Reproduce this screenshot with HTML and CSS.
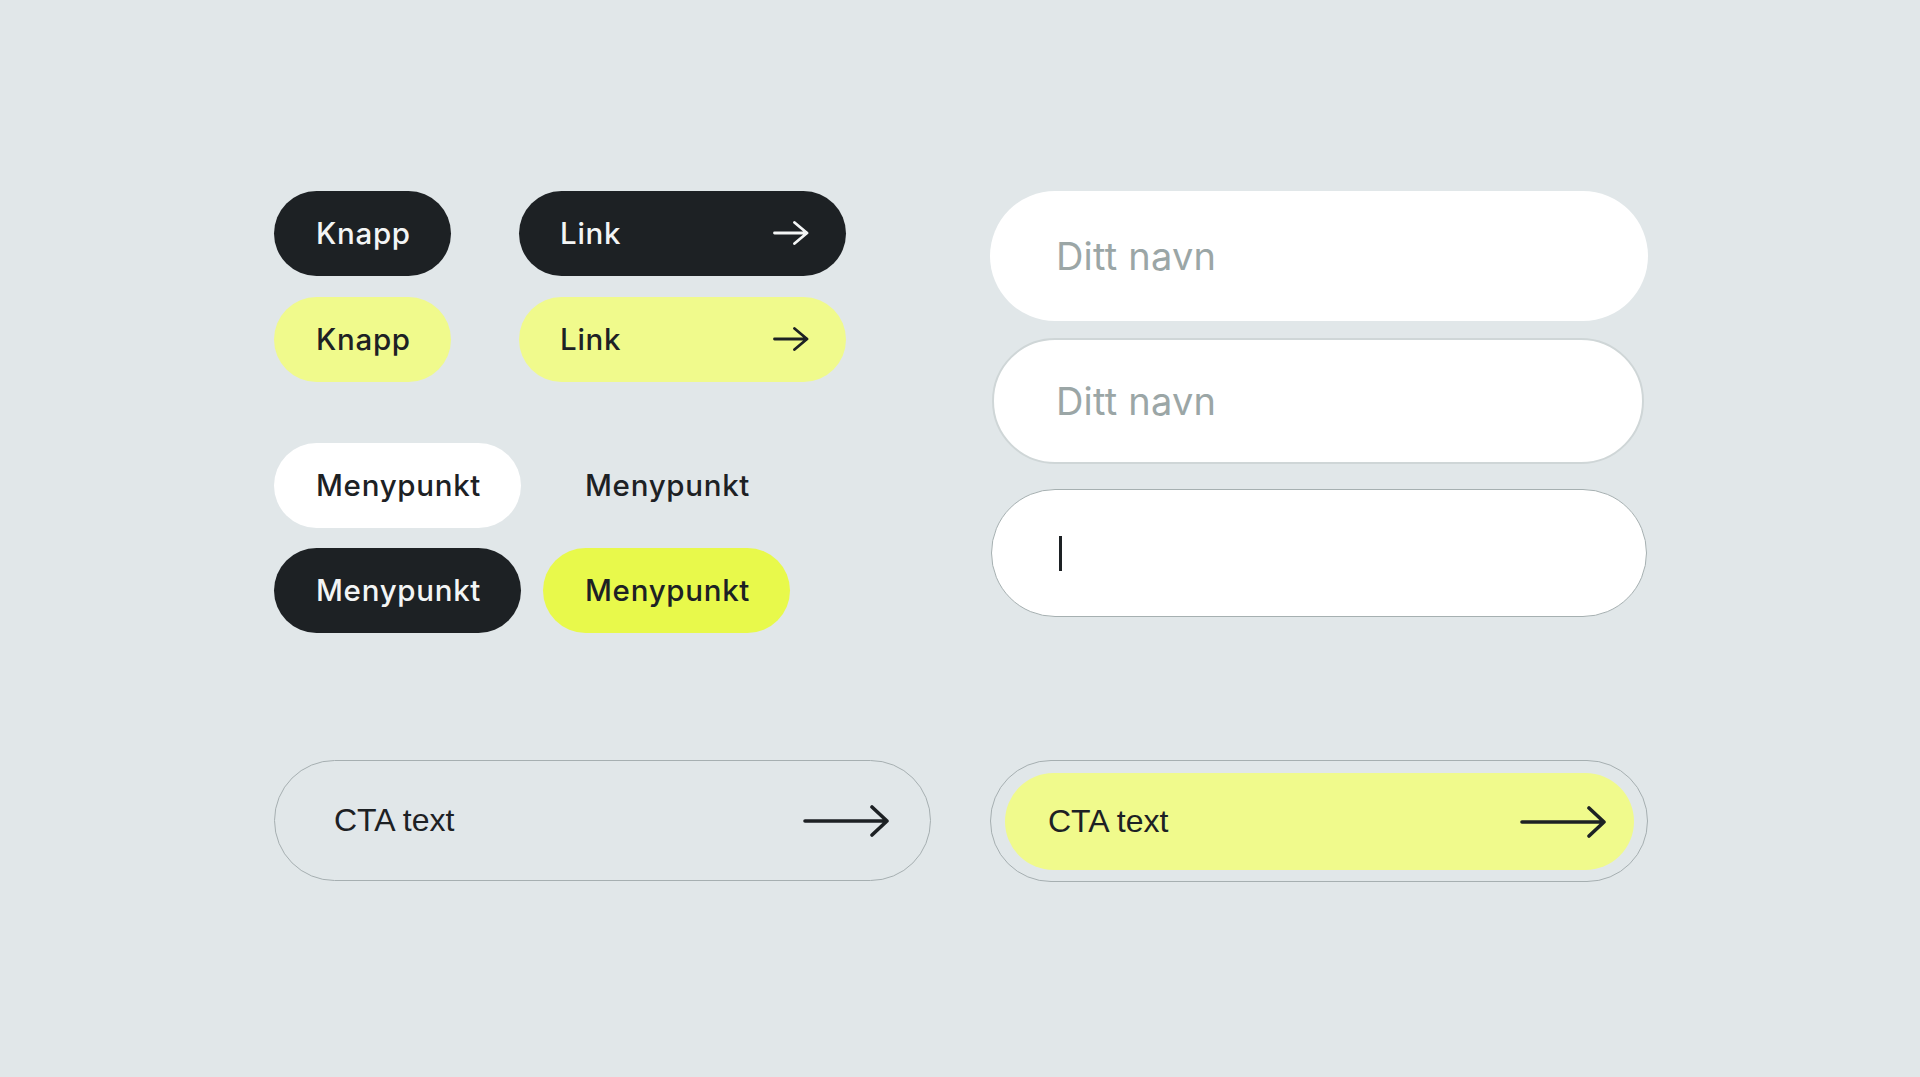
FILE: index.html
```html
<!DOCTYPE html>
<html lang="no">
<head>
<meta charset="utf-8">
<title>Komponenter</title>
<link rel="stylesheet" href="styles.css">
</head>
<body>
<main class="board">
  <section class="col-left">
    <div class="btn-row">
      <a class="pill pill-dark btn-knapp">Knapp</a>
      <a class="pill pill-dark btn-link"><span>Link</span>
        <svg class="arrow-sm" viewBox="0 0 36 24" width="36" height="24"><path d="M1.5 12H34M21.5 1.5L34 12L21.5 22.5" fill="none" stroke="currentColor" stroke-width="2.8" stroke-linecap="round" stroke-linejoin="round"/></svg>
      </a>
    </div>
    <div class="btn-row gap-sm">
      <a class="pill pill-pale btn-knapp">Knapp</a>
      <a class="pill pill-pale btn-link"><span>Link</span>
        <svg class="arrow-sm" viewBox="0 0 36 24" width="36" height="24"><path d="M1.5 12H34M21.5 1.5L34 12L21.5 22.5" fill="none" stroke="currentColor" stroke-width="2.8" stroke-linecap="round" stroke-linejoin="round"/></svg>
      </a>
    </div>
    <div class="menu-row gap-lg">
      <a class="pill menu pill-white">Menypunkt</a>
      <a class="pill menu pill-plain">Menypunkt</a>
    </div>
    <div class="menu-row gap-sm2">
      <a class="pill menu pill-dark">Menypunkt</a>
      <a class="pill menu pill-bright">Menypunkt</a>
    </div>
  </section>

  <section class="col-right">
    <div class="field field-plain"><span class="placeholder">Ditt navn</span></div>
    <div class="field field-hover"><span class="placeholder">Ditt navn</span></div>
    <div class="field field-focus"><span class="caret"></span></div>
  </section>

  <a class="cta cta-outline"><span>CTA text</span>
    <svg class="arrow-lg" viewBox="0 0 86 32" width="86" height="32"><path d="M2 16H84M69 2L84 16L69 30" fill="none" stroke="currentColor" stroke-width="3.6" stroke-linecap="round" stroke-linejoin="round"/></svg>
  </a>

  <div class="cta-ring">
    <a class="cta cta-fill"><span>CTA text</span>
      <svg class="arrow-lg" viewBox="0 0 86 32" width="86" height="32"><path d="M2 16H84M69 2L84 16L69 30" fill="none" stroke="currentColor" stroke-width="3.6" stroke-linecap="round" stroke-linejoin="round"/></svg>
    </a>
  </div>
</main>
</body>
</html>
```

FILE: styles.css
```css
* { box-sizing: border-box; }

html, body {
  margin: 0;
  padding: 0;
  background: #e1e7e9;
  width: 1920px;
  height: 1077px;
  overflow: hidden;
}

body {
  font-family: Inter, "Noto Sans", sans-serif;
  color: #1d2124;
}

.board {
  display: grid;
  grid-template-columns: 657px 658px;
  column-gap: 59px;
  row-gap: 127px;
  align-items: start;
  padding: 191px 0 0 274px;
}

.col-left, .col-right {
  display: flex;
  flex-direction: column;
}

.btn-row, .menu-row {
  display: flex;
  align-items: center;
}

.btn-row { gap: 68px; }
.menu-row { gap: 22px; }

.gap-sm { margin-top: 21px; }
.gap-lg { margin-top: 61px; }
.gap-sm2 { margin-top: 20px; }

.pill {
  display: flex;
  align-items: center;
  height: 85px;
  border-radius: 43px;
  padding: 0 42px;
  padding-bottom: 2px;
  font-size: 29.5px;
  font-weight: 500;
  letter-spacing: 0.7px;
  text-decoration: none;
  white-space: nowrap;
}

.pill-dark { background: #1d2124; color: #f3f5f5; }
.pill-pale { background: #f0fa8c; color: #1d2124; }
.pill-white { background: #ffffff; color: #1d2124; }
.pill-plain { background: transparent; color: #1d2124; }
.pill-bright { background: #e8f94b; color: #1d2124; }

.btn-knapp { width: 177px; }

.btn-link {
  width: 327px;
  padding: 0 37px 2px 41px;
  justify-content: space-between;
}

.menu {
  width: 247px;
}

.arrow-sm { display: block; }

/* inputs */
.field {
  display: flex;
  align-items: center;
  background: #ffffff;
  border-radius: 66px;
  padding-left: 66px;
}

.field-plain {
  height: 130px;
  width: 658px;
}

.field-hover {
  margin: 17px 4px 0 2px;
  height: 126px;
  border: 2px solid #cfd6d7;
  padding-left: 62px;
}

.field-focus {
  margin: 25px 1px 0 1px;
  height: 128px;
  border: 1.5px solid #a6b0b1;
  padding-left: 67px;
}

.placeholder {
  font-size: 38px;
  font-weight: 400;
  color: #9ba6a6;
  letter-spacing: 0.2px;
}

.caret {
  display: block;
  width: 3px;
  height: 35px;
  background: #1d2124;
}

/* CTA */
.cta {
  display: flex;
  align-items: center;
  justify-content: space-between;
  font-family: "Liberation Sans", Arial, sans-serif;
  font-size: 32px;
  color: #1d2124;
  text-decoration: none;
  white-space: nowrap;
}

.cta-outline {
  height: 121px;
  border: 1.5px solid #a6afb1;
  border-radius: 61px;
  padding: 0 41px 0 59px;
}

.cta-ring {
  height: 122px;
  border: 1.5px solid #a6afb1;
  border-radius: 61px;
  padding: 12px 13px 11px 14px;
}

.cta-fill {
  height: 100%;
  background: #f0fa8c;
  border-radius: 50px;
  padding: 0 28px 0 43px;
}

.arrow-lg { display: block; }
```
